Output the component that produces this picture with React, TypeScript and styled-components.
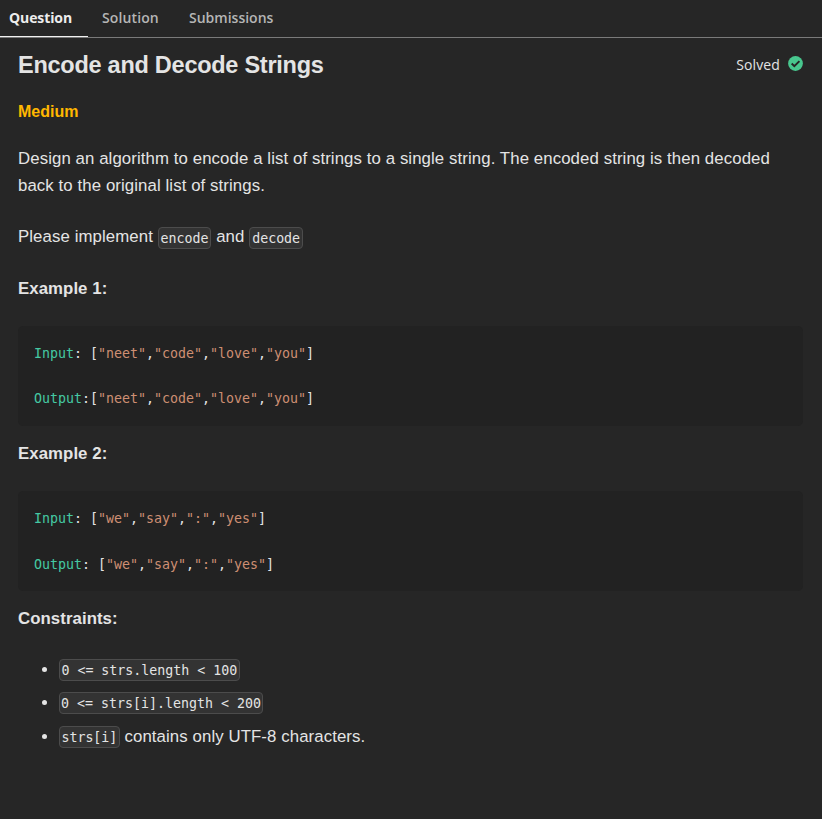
import React from "react";
import styled, { createGlobalStyle } from "styled-components";

const GlobalStyle = createGlobalStyle`
  * { box-sizing: border-box; }
  html, body { margin: 0; background: #262626; }
  body { overflow: hidden; }
`;

const Page = styled.div`
  height: 819px;
  background: #262626;
  color: #e4e4e4;
  font: 16.8px/27px "Liberation Sans", Arial, sans-serif;
  letter-spacing: 0.095px;
`;

const Tabs = styled.nav`
  display: flex;
  height: 38px;
  border-bottom: 1px solid #7a7a7a;
  font: 600 14px/36px "Open Sans", "Segoe UI", sans-serif;
`;

const Tab = styled.div<{ $width: number; $active?: boolean; $spacing: number }>`
  width: ${(p) => p.$width}px;
  height: 37px;
  padding-left: ${(p) => (p.$active ? 9 : 14)}px;
  color: ${(p) => (p.$active ? "#ededed" : "#b5b5b5")};
  font-weight: ${(p) => (p.$active ? 700 : 600)};
  letter-spacing: ${(p) => p.$spacing}px;
  border-bottom: 1px solid ${(p) => (p.$active ? "#f0f0f0" : "transparent")};
`;

const Content = styled.main`
  padding: 0 19px 0 18px;
`;

const Header = styled.header`
  display: flex;
  justify-content: space-between;
  height: 53px;
`;

const Title = styled.h1`
  margin: 0;
  font-size: 23.5px;
  line-height: 54px;
  letter-spacing: -0.26px;
`;

const Status = styled.div`
  display: flex;
  align-items: flex-start;
  gap: 8px;
  height: 52px;
  font: 14px/54px "Open Sans", "Segoe UI", sans-serif;
  letter-spacing: 0.12px;
`;

const CheckIcon = styled.svg`
  margin-top: 18px;
`;

const Difficulty = styled.div`
  height: 40px;
  padding-top: 1px;
  font-size: 16px;
  line-height: 40px;
  font-weight: 700;
  letter-spacing: 0;
  color: #ffb700;
`;

const Paragraph = styled.p<{ $top: number }>`
  margin: ${(p) => p.$top}px 0 0;
`;

const Heading = styled.h2<{ $top: number }>`
  margin: ${(p) => p.$top}px 0 0;
  font-size: 16.8px;
  line-height: 27px;
  letter-spacing: 0.07px;
`;

const Code = styled.code<{ $shift?: number; $pad?: number }>`
  display: inline-block;
  height: 22px;
  padding: 0 ${(p) => p.$pad ?? 1.4}px;
  border: 1px solid #4c4c4c;
  border-radius: 4px;
  background: #333333;
  font: 13.29px/21px "DejaVu Sans Mono", monospace;
  letter-spacing: 0;
  vertical-align: ${(p) => p.$shift ?? -1}px;
`;

const Block = styled.pre<{ $gap: number }>`
  display: flex;
  flex-direction: column;
  gap: ${(p) => p.$gap}px;
  height: 100px;
  margin: 24px 0 0;
  padding: 17px 16px;
  border-radius: 5px;
  background: #222222;
  font: 13.29px/22px "DejaVu Sans Mono", monospace;
  letter-spacing: 0;
`;

const Label = styled.span`
  color: #45c9a3;
`;

const Str = styled.span`
  color: #ce8f73;
`;

const List = styled.ul`
  margin: 24px 0 0;
  padding: 0 0 0 41px;
`;

const Item = styled.li<{ $height: number }>`
  height: ${(p) => p.$height}px;
  line-height: 27px;
`;

function Line({ label, after, values }: { label: string; after: string; values: string[] }) {
  return (
    <div>
      <Label>{label}</Label>
      {after}[
      {values.map((value, i) => (
        <React.Fragment key={value}>
          {i > 0 && ","}
          <Str>{`"${value}"`}</Str>
        </React.Fragment>
      ))}
      ]
    </div>
  );
}

export default function App() {
  const first = ["neet", "code", "love", "you"];
  const second = ["we", "say", ":", "yes"];
  return (
    <Page>
      <GlobalStyle />
      <Tabs>
        <Tab $width={88} $active $spacing={-0.1}>Question</Tab>
        <Tab $width={87} $spacing={0.12}>Solution</Tab>
        <Tab $width={120} $spacing={0}>Submissions</Tab>
      </Tabs>
      <Content>
        <Header>
          <Title>Encode and Decode Strings</Title>
          <Status>
            Solved
            <CheckIcon width="15" height="15" viewBox="0 0 512 512">
              <circle cx="256" cy="256" r="252" fill="#48c78e" />
              <path d="M126 258l90 90 174-174" fill="none" stroke="#262626" strokeWidth="68" />
            </CheckIcon>
          </Status>
        </Header>
        <Difficulty>Medium</Difficulty>
        <Paragraph $top={14}>
          Design an algorithm to encode a list of strings to a single string. The encoded string is then decoded
          back to the original list of strings.
        </Paragraph>
        <Paragraph $top={24}>
          Please implement <Code $pad={1.9}>encode</Code> and <Code $pad={1.9}>decode</Code>
        </Paragraph>
        <Heading $top={25}>Example 1:</Heading>
        <Block $gap={23}>
          <Line label="Input" after=": " values={first} />
          <Line label="Output" after=":" values={first} />
        </Block>
        <Heading $top={14}>Example 2:</Heading>
        <Block $gap={24}>
          <Line label="Input" after=": " values={second} />
          <Line label="Output" after=": " values={second} />
        </Block>
        <Heading $top={14}>Constraints:</Heading>
        <List>
          <Item $height={33}><Code $shift={0}>{"0 <= strs.length < 100"}</Code></Item>
          <Item $height={34}><Code $shift={0} $pad={1}>{"0 <= strs[i].length < 200"}</Code></Item>
          <Item $height={33}><Code $shift={0}>strs[i]</Code> contains only UTF-8 characters.</Item>
        </List>
      </Content>
    </Page>
  );
}
